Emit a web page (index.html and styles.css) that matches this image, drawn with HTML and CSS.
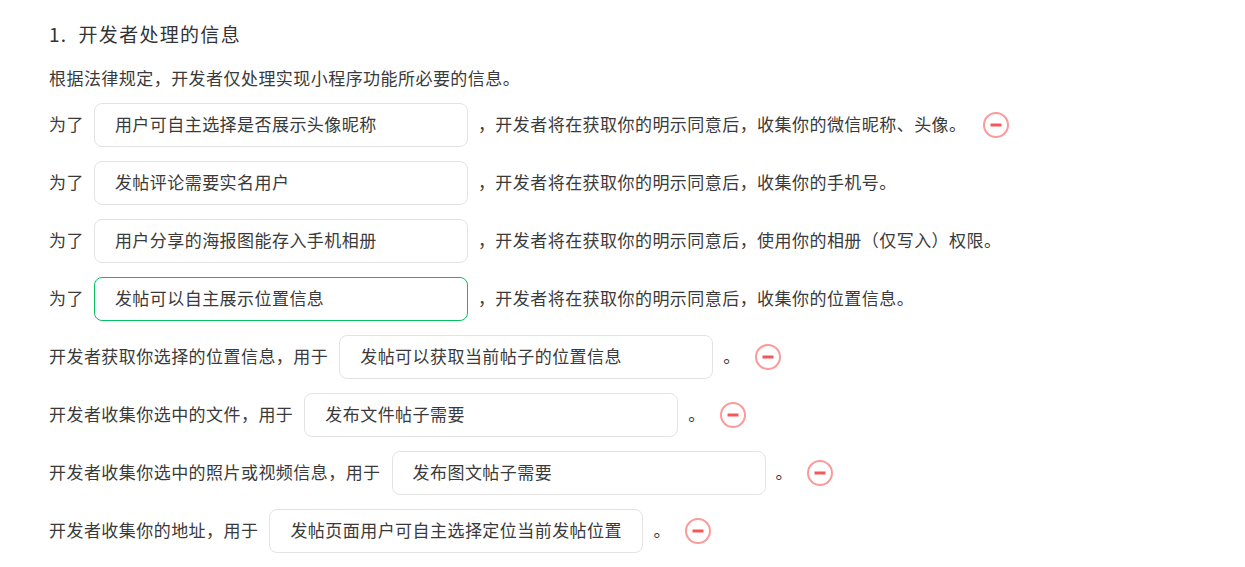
FILE: index.html
```html
<!DOCTYPE html>
<html lang="zh-CN">
<head>
<meta charset="utf-8">
<title>开发者处理的信息</title>
<link rel="stylesheet" href="styles.css">
</head>
<body>
<div class="page">
  <h2 class="title">1.&nbsp;&nbsp;开发者处理的信息</h2>
  <p class="intro">根据法律规定，开发者仅处理实现小程序功能所必要的信息。</p>

  <div class="row">
    <span class="label short">为了</span>
    <div class="field">用户可自主选择是否展示头像昵称</div>
    <span class="after">，开发者将在获取你的明示同意后，收集你的微信昵称、头像。</span>
    <svg class="remove" width="26" height="26" viewBox="0 0 26 26"><circle cx="13" cy="13" r="12" fill="none" stroke="#fb9a9a" stroke-width="2"/><line x1="7.5" y1="13" x2="18.5" y2="13" stroke="#f75656" stroke-width="3"/></svg>
  </div>

  <div class="row">
    <span class="label short">为了</span>
    <div class="field">发帖评论需要实名用户</div>
    <span class="after">，开发者将在获取你的明示同意后，收集你的手机号。</span>
  </div>

  <div class="row">
    <span class="label short">为了</span>
    <div class="field">用户分享的海报图能存入手机相册</div>
    <span class="after">，开发者将在获取你的明示同意后，使用你的相册（仅写入）权限。</span>
  </div>

  <div class="row">
    <span class="label short">为了</span>
    <div class="field focus">发帖可以自主展示位置信息</div>
    <span class="after">，开发者将在获取你的明示同意后，收集你的位置信息。</span>
  </div>

  <div class="row">
    <span class="label">开发者获取你选择的位置信息，用于</span>
    <div class="field">发帖可以获取当前帖子的位置信息</div>
    <span class="end">。</span>
    <svg class="remove" width="26" height="26" viewBox="0 0 26 26"><circle cx="13" cy="13" r="12" fill="none" stroke="#fb9a9a" stroke-width="2"/><line x1="7.5" y1="13" x2="18.5" y2="13" stroke="#f75656" stroke-width="3"/></svg>
  </div>

  <div class="row">
    <span class="label">开发者收集你选中的文件，用于</span>
    <div class="field">发布文件帖子需要</div>
    <span class="end">。</span>
    <svg class="remove" width="26" height="26" viewBox="0 0 26 26"><circle cx="13" cy="13" r="12" fill="none" stroke="#fb9a9a" stroke-width="2"/><line x1="7.5" y1="13" x2="18.5" y2="13" stroke="#f75656" stroke-width="3"/></svg>
  </div>

  <div class="row">
    <span class="label">开发者收集你选中的照片或视频信息，用于</span>
    <div class="field">发布图文帖子需要</div>
    <span class="end">。</span>
    <svg class="remove" width="26" height="26" viewBox="0 0 26 26"><circle cx="13" cy="13" r="12" fill="none" stroke="#fb9a9a" stroke-width="2"/><line x1="7.5" y1="13" x2="18.5" y2="13" stroke="#f75656" stroke-width="3"/></svg>
  </div>

  <div class="row">
    <span class="label">开发者收集你的地址，用于</span>
    <div class="field">发帖页面用户可自主选择定位当前发帖位置</div>
    <span class="end">。</span>
    <svg class="remove" width="26" height="26" viewBox="0 0 26 26"><circle cx="13" cy="13" r="12" fill="none" stroke="#fb9a9a" stroke-width="2"/><line x1="7.5" y1="13" x2="18.5" y2="13" stroke="#f75656" stroke-width="3"/></svg>
  </div>
</div>
</body>
</html>
```

FILE: styles.css
```css
html, body {
  margin: 0;
  padding: 0;
  background: #ffffff;
}

body {
  font-family: "Noto Sans CJK SC", "Noto Sans", sans-serif;
  color: #3a3a3a;
}

.page {
  padding: 20px 0 0 49px;
  display: flex;
  flex-direction: column;
}

.title {
  margin: 0;
  font-size: 19px;
  line-height: 28px;
  font-weight: 400;
  letter-spacing: 1.3px;
  color: #333333;
}

.intro {
  margin: 17px 0 12px;
  font-size: 17px;
  line-height: 26px;
  letter-spacing: 0.45px;
}

.row {
  display: flex;
  align-items: center;
  height: 44px;
  margin-bottom: 14px;
  font-size: 17px;
  letter-spacing: 0.45px;
  white-space: nowrap;
}

.label,
.after,
.end {
  padding-bottom: 3px;
}

.label {
  margin-right: 11px;
}

.label.short {
  margin-right: 10px;
}

.field {
  box-sizing: border-box;
  width: 374px;
  height: 44px;
  border: 1px solid #e3e3e3;
  border-radius: 8px;
  padding: 0 0 3px 20px;
  display: flex;
  align-items: center;
  color: #3a3a3a;
  flex-shrink: 0;
}

.field.focus {
  border-color: #07c160;
}

.after {
  margin-left: 10px;
}

.end {
  margin-left: 10px;
}

.remove {
  margin-left: 16px;
  flex-shrink: 0;
}

.end + .remove {
  margin-left: 14px;
}
```
